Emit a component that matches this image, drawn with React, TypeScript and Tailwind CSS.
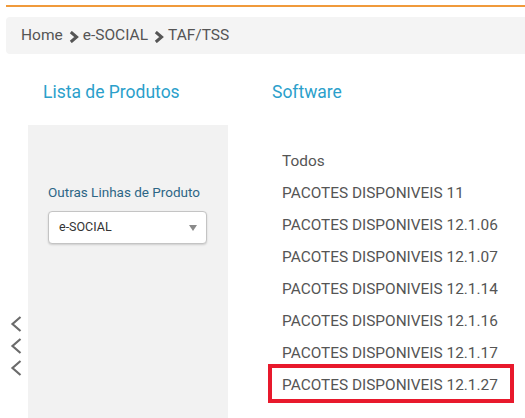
import React from 'react';

const pacotes = [
  'Todos',
  'PACOTES DISPONIVEIS 11',
  'PACOTES DISPONIVEIS 12.1.06',
  'PACOTES DISPONIVEIS 12.1.07',
  'PACOTES DISPONIVEIS 12.1.14',
  'PACOTES DISPONIVEIS 12.1.16',
  'PACOTES DISPONIVEIS 12.1.17',
  'PACOTES DISPONIVEIS 12.1.27',
];

function Crumb() {
  return (
    <svg width="10" height="12" viewBox="0 0 10 12" className="shrink-0 ml-[6px] mr-[4px] mt-[3px]">
      <path d="M1.8 1 L7.6 6 L1.8 11" fill="none" stroke="#555" strokeWidth="3" />
    </svg>
  );
}

function Chevron() {
  return (
    <svg width="12" height="16" viewBox="0 0 12 16">
      <path d="M10.5 1 L2.5 8 L10.5 15" fill="none" stroke="#6b6b6b" strokeWidth="2.2" />
    </svg>
  );
}

export default function App() {
  return (
    <div className="w-[525px] h-[418px] bg-white overflow-hidden font-['Roboto',sans-serif]">
      {/* top accent */}
      <div className="ml-[6px] mt-[5px] h-[2px] bg-[#f09a3b]" />

      {/* breadcrumb */}
      <div className="ml-[6px] mt-[10px] h-[37px] bg-[#f4f4f4] rounded-l-[4px] flex items-center pl-[15px] text-[15.5px] text-[#555]">
        <span>Home</span>
        <Crumb />
        <span>e-SOCIAL</span>
        <Crumb />
        <span>TAF/TSS</span>
      </div>

      <div className="flex mt-[26px]">
        {/* left column */}
        <div className="w-[228px] flex flex-col">
          <div className="pl-[43px] h-[24px] leading-[24px] text-[17.5px] text-[#2b9fcb]">Lista de Produtos</div>
          <div className="flex mt-[21px] h-[300px]">
            <div className="w-[28px] flex flex-col items-start pl-[10px] pt-[191px] gap-[6px]">
              <Chevron />
              <Chevron />
              <Chevron />
            </div>
            <div className="w-[200px] bg-[#f2f2f2] pl-[20px] pt-[57px]">
              <div className="text-[13.5px] leading-[20px] text-[#2d6686]">Outras Linhas de Produto</div>
              <div className="mt-[9px] w-[159px] h-[33px] bg-white border border-[#c4c4c4] rounded-[4px] shadow-[0_1px_2px_rgba(0,0,0,0.15)] flex items-center justify-between pl-[10px] pr-[9px]">
                <span className="text-[12.5px] text-[#333]">e-SOCIAL</span>
                <svg width="8" height="6" viewBox="0 0 8 6">
                  <path d="M0 0 H8 L4 6 Z" fill="#8a8a8a" />
                </svg>
              </div>
            </div>
          </div>
        </div>

        {/* right column */}
        <div className="flex-1 pl-[44px]">
          <div className="h-[24px] leading-[24px] text-[17.5px] text-[#2b9fcb]">Software</div>
          <ul className="mt-[41px] pl-[10px] text-[15.4px] text-[#555]">
            {pacotes.map((p, i) => (
              <li key={p} className="relative h-[32px] leading-[32px] whitespace-nowrap">
                {p}
                {i === pacotes.length - 1 && (
                  <span className="absolute left-[-14px] top-[-5px] w-[246px] h-[39px] border-[4px] border-[#e8192c]" />
                )}
              </li>
            ))}
          </ul>
        </div>
      </div>
    </div>
  );
}
